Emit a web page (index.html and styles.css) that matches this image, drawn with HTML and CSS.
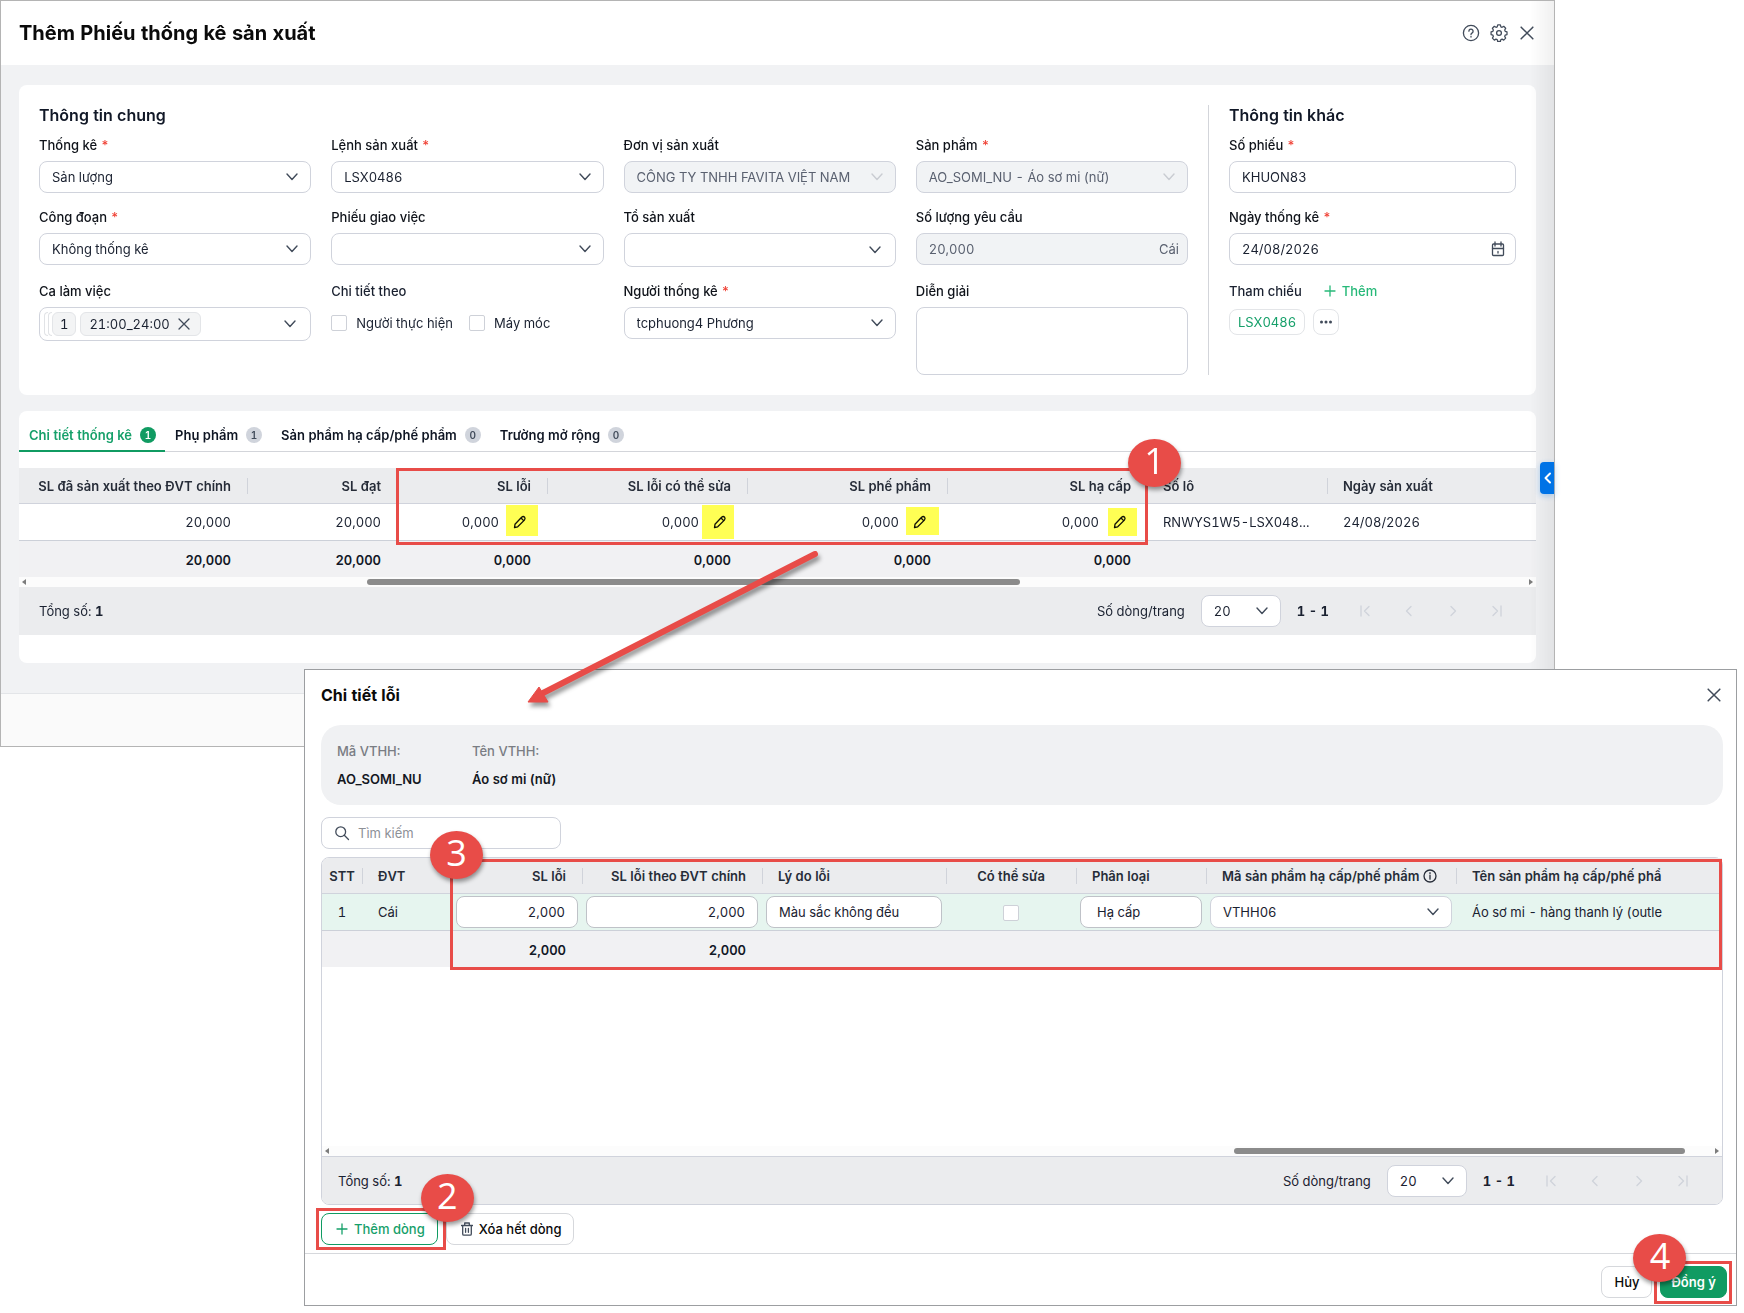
FILE: index.html
```html
<!DOCTYPE html>
<html lang="vi">
<head>
<meta charset="utf-8">
<meta name="viewport" content="width=device-width, initial-scale=1">
<title>Thêm Phiếu thống kê sản xuất</title>
<link rel="stylesheet" href="styles.css">
</head>
<body>
<svg class="sprite" aria-hidden="true">
  <symbol id="i-close" viewBox="0 0 12 12"><path d="M1 1l10 10M11 1L1 11"/></symbol>
  <symbol id="i-plus" viewBox="0 0 12 12"><path d="M6 1v10M1 6h10"/></symbol>
  <symbol id="i-pencil" viewBox="0 0 14 14"><path d="M1.500 12.500l.5-3.200 6.600-7.100q1.700-1.300 3 0q1 1.300-.2 2.900l-6.700 6.700zM8 3l2.300 2.300"/></symbol>
  <symbol id="i-left" viewBox="0 0 12 12"><path d="M8 1.500L3.500 6 8 10.500"/></symbol>
  <symbol id="i-right" viewBox="0 0 12 12"><path d="M4 1.500L8.500 6 4 10.500"/></symbol>
  <symbol id="i-first" viewBox="0 0 12 12"><path d="M2 1v10M10 1.500L5.500 6l4.500 4.500"/></symbol>
  <symbol id="i-last" viewBox="0 0 12 12"><path d="M10 1v10M2 1.500L6.500 6 2 10.500"/></symbol>
</svg>

<main class="window">
  <header class="window-head">
    <h1>Thêm Phiếu thống kê sản xuất</h1>
    <div class="head-actions">
      <button class="icon-btn" type="button" aria-label="Trợ giúp">
        <svg width="18" height="18" viewBox="0 0 18 18" class="ico"><circle cx="9" cy="9" r="7.600"/><path d="M6.900 7.200a2.100 2.100 0 1 1 3.300 1.700c-.8.5-1.200.9-1.200 1.700"/><path d="M9 12.400v.6"/></svg>
      </button>
      <button class="icon-btn" type="button" aria-label="Thiết lập">
        <svg width="18" height="18" viewBox="0 0 18 18" class="ico"><circle cx="9" cy="9" r="2.400"/><path d="M7.600 1.400h2.800l.5 1.900 1.300.5 1.700-1 2 2-1 1.700.5 1.300 1.900.5v2.800l-1.900.5-.5 1.300 1 1.700-2 2-1.700-1-1.300.5-.5 1.900H7.600l-.5-1.900-1.300-.5-1.700 1-2-2 1-1.700-.5-1.300-1.900-.5V8.300l1.900-.5.5-1.300-1-1.700 2-2 1.700 1 1.300-.5z" transform="translate(.4 -.5) scale(.96 1)"/></svg>
      </button>
      <button class="icon-btn" type="button" aria-label="Đóng"><svg width="14" height="14" class="ico"><use href="#i-close"/></svg></button>
    </div>
  </header>

  <div class="window-body">
    <section class="card form-card">
      <div class="form-main">
        <h2>Thông tin chung</h2>
        <div class="form-grid">
          <div class="field">
            <label for="thongke">Thống kê <span class="req">*</span></label>
            <select id="thongke" class="control"><option>Sản lượng</option></select>
          </div>
          <div class="field">
            <label for="lenh">Lệnh sản xuất <span class="req">*</span></label>
            <select id="lenh" class="control"><option>LSX0486</option></select>
          </div>
          <div class="field">
            <label for="donvi">Đơn vị sản xuất</label>
            <select id="donvi" class="control" disabled><option>CÔNG TY TNHH FAVITA VIỆT NAM</option></select>
          </div>
          <div class="field">
            <label for="sanpham">Sản phẩm <span class="req">*</span></label>
            <select id="sanpham" class="control" disabled><option>AO_SOMI_NU - Áo sơ mi (nữ)</option></select>
          </div>
          <div class="field">
            <label for="congdoan">Công đoạn <span class="req">*</span></label>
            <select id="congdoan" class="control"><option>Không thống kê</option></select>
          </div>
          <div class="field">
            <label for="phieugv">Phiếu giao việc</label>
            <select id="phieugv" class="control"><option></option></select>
          </div>
          <div class="field">
            <label for="tosx">Tổ sản xuất</label>
            <select id="tosx" class="control tall"><option></option></select>
          </div>
          <div class="field">
            <label for="slyc">Số lượng yêu cầu</label>
            <div class="control group disabled"><input id="slyc" type="text" value="20,000" disabled><span>Cái</span></div>
          </div>
          <div class="field">
            <span class="label" id="ca-label">Ca làm việc</span>
            <div class="control tall tags" role="group" aria-labelledby="ca-label">
              <span class="stack"><i></i><i></i><span class="tag">1</span></span>
              <span class="tag wide">21:00_24:00 <button class="tag-x" type="button" aria-label="Bỏ chọn"><svg width="12" height="12" class="ico"><use href="#i-close"/></svg></button></span>
            </div>
          </div>
          <div class="field">
            <span class="label plain">Chi tiết theo</span>
            <div class="checks">
              <label><input type="checkbox" class="check">Người thực hiện</label>
              <label><input type="checkbox" class="check">Máy móc</label>
            </div>
          </div>
          <div class="field">
            <label for="nguoitk">Người thống kê <span class="req">*</span></label>
            <select id="nguoitk" class="control"><option>tcphuong4 Phương</option></select>
          </div>
          <div class="field">
            <label for="diengiai">Diễn giải</label>
            <textarea id="diengiai" class="control area"></textarea>
          </div>
        </div>
      </div>
      <div class="form-side">
        <h2>Thông tin khác</h2>
        <div class="side-fields">
          <div class="field">
            <label for="sophieu">Số phiếu <span class="req">*</span></label>
            <input id="sophieu" class="control" type="text" value="KHUON83">
          </div>
          <div class="field">
            <label for="ngaytk">Ngày thống kê <span class="req">*</span></label>
            <div class="control group date"><input id="ngaytk" type="text" value="24/08/2026">
              <svg width="14" height="16" viewBox="0 0 14 16" class="ico cal"><rect x="1.500" y="3" width="11" height="11.500" rx="1"/><path d="M1.500 7.500h11M4 1v4M10 1v4M7 10.500v1.500"/></svg>
            </div>
          </div>
          <div class="field refs">
            <div class="ref-head"><span class="label plain">Tham chiếu</span>
              <button class="add-link" type="button"><svg width="12" height="12" class="ico"><use href="#i-plus"/></svg>Thêm</button></div>
            <div class="chips"><a class="chip" href="#lsx0486">LSX0486</a>
              <button class="chip more" type="button" aria-label="Xem thêm"><svg width="12" height="4" viewBox="0 0 12 4"><circle cx="1.500" cy="2" r="1.500"/><circle cx="6" cy="2" r="1.500"/><circle cx="10.500" cy="2" r="1.500"/></svg></button></div>
          </div>
        </div>
      </div>
    </section>

    <section class="card list-card">
      <nav class="tabs">
        <button class="tab active" type="button">Chi tiết thống kê<span class="count">1</span></button>
        <button class="tab" type="button">Phụ phẩm<span class="count">1</span></button>
        <button class="tab" type="button">Sản phẩm hạ cấp/phế phẩm<span class="count">0</span></button>
        <button class="tab" type="button">Trường mở rộng<span class="count">0</span></button>
      </nav>
      <div class="table-wrap">
        <table class="grid">
          <colgroup><col class="w228"><col class="w150"><col class="w150"><col class="w200"><col class="w200"><col class="w200"><col class="w180"><col></colgroup>
          <thead><tr><th class="num">SL đã sản xuất theo ĐVT chính</th><th class="num">SL đạt</th><th class="num">SL lỗi</th><th class="num">SL lỗi có thể sửa</th><th class="num">SL phế phẩm</th><th class="num">SL hạ cấp</th><th>Số lô</th><th>Ngày sản xuất</th></tr></thead>
          <tbody><tr>
            <td class="num">20,000</td><td class="num">20,000</td>
            <td><div class="edit">0,000<button type="button" class="pen" aria-label="Sửa SL lỗi"><svg width="14" height="14" class="ico"><use href="#i-pencil"/></svg></button></div><span class="hl hl-a"></span></td>
            <td><div class="edit">0,000<button type="button" class="pen" aria-label="Sửa SL lỗi có thể sửa"><svg width="14" height="14" class="ico"><use href="#i-pencil"/></svg></button></div><span class="hl hl-b"></span></td>
            <td><div class="edit">0,000<button type="button" class="pen" aria-label="Sửa SL phế phẩm"><svg width="14" height="14" class="ico"><use href="#i-pencil"/></svg></button></div><span class="hl hl-c"></span></td>
            <td><div class="edit">0,000<button type="button" class="pen" aria-label="Sửa SL hạ cấp"><svg width="14" height="14" class="ico"><use href="#i-pencil"/></svg></button></div><span class="hl hl-d"></span></td>
            <td>RNWYS1W5-LSX048...</td><td>24/08/2026</td>
          </tr></tbody>
          <tfoot><tr><td class="num">20,000</td><td class="num">20,000</td><td class="num">0,000</td><td class="num">0,000</td><td class="num">0,000</td><td class="num">0,000</td><td></td><td></td></tr></tfoot>
        </table>
        <div class="frame frame-1"><span class="step">1</span></div>
      </div>
      <div class="scroll scroll-a"><i class="arr-l"></i><i class="thumb"></i><i class="arr-r"></i></div>
      <div class="pager">
        <span>Tổng số: <b>1</b></span>
        <div class="pager-right">
          <label for="size-a">Số dòng/trang</label>
          <select id="size-a" class="control size"><option>20</option></select>
          <b class="range">1 - 1</b>
          <div class="pages">
            <button type="button" disabled aria-label="Trang đầu"><svg width="12" height="12" class="ico"><use href="#i-first"/></svg></button>
            <button type="button" disabled aria-label="Trang trước"><svg width="12" height="12" class="ico"><use href="#i-left"/></svg></button>
            <button type="button" disabled aria-label="Trang sau"><svg width="12" height="12" class="ico"><use href="#i-right"/></svg></button>
            <button type="button" disabled aria-label="Trang cuối"><svg width="12" height="12" class="ico"><use href="#i-last"/></svg></button>
          </div>
        </div>
      </div>
    </section>
  </div>
  <div class="window-foot"></div>
  <div class="edge"></div>
  <button class="drawer" type="button" aria-label="Mở rộng"><svg width="12" height="12" class="ico"><use href="#i-left"/></svg></button>
</main>

<section class="dialog" role="dialog" aria-labelledby="dlg-title">
  <header class="dialog-head">
    <h2 id="dlg-title">Chi tiết lỗi</h2>
    <button class="icon-btn" type="button" aria-label="Đóng"><svg width="14" height="14" class="ico"><use href="#i-close"/></svg></button>
  </header>
  <div class="dialog-body">
    <dl class="info">
      <div><dt>Mã VTHH:</dt><dd>AO_SOMI_NU</dd></div>
      <div><dt>Tên VTHH:</dt><dd>Áo sơ mi (nữ)</dd></div>
    </dl>
    <div class="control group search">
      <svg width="16" height="16" viewBox="0 0 16 16" class="ico"><circle cx="6.700" cy="6.700" r="4.900"/><path d="M10.300 10.300l4.200 4.200"/></svg>
      <input type="search" placeholder="Tìm kiếm" aria-label="Tìm kiếm">
    </div>
    <div class="panel">
      <div class="table-wrap blank">
        <table class="grid defects">
          <colgroup><col class="w40"><col class="w90"><col class="w130"><col class="w180"><col class="w184"><col class="w130"><col class="w130"><col class="w250"><col class="w222"><col></colgroup>
          <thead><tr><th class="mid">STT</th><th>ĐVT</th><th class="num">SL lỗi</th><th class="num">SL lỗi theo ĐVT chính</th><th>Lý do lỗi</th><th class="mid">Có thể sửa</th><th>Phân loại</th>
            <th><div class="with-info">Mã sản phẩm hạ cấp/phế phẩm<svg width="14" height="14" viewBox="0 0 14 14" class="ico"><circle cx="7" cy="7" r="6"/><path d="M7 6.200v4M7 3.700v.8"/></svg></div></th>
            <th>Tên sản phẩm hạ cấp/phế phẩ</th><td></td></tr></thead>
          <tbody><tr>
            <td class="mid">1</td><td>Cái</td>
            <td class="cell"><input class="control num" type="text" value="2,000" aria-label="SL lỗi"></td>
            <td class="cell"><input class="control num" type="text" value="2,000" aria-label="SL lỗi theo ĐVT chính"></td>
            <td class="cell"><input class="control" type="text" value="Màu sắc không đều" aria-label="Lý do lỗi"></td>
            <td class="mid"><input type="checkbox" class="check" aria-label="Có thể sửa"></td>
            <td class="cell"><input class="control kind" type="text" value="Hạ cấp" aria-label="Phân loại"></td>
            <td class="cell"><select class="control light" aria-label="Mã sản phẩm hạ cấp/phế phẩm"><option>VTHH06</option></select></td>
            <td>Áo sơ mi - hàng thanh lý (outle</td><td></td>
          </tr></tbody>
          <tfoot><tr><td></td><td></td><td class="num">2,000</td><td class="num">2,000</td><td></td><td></td><td></td><td></td><td></td><td></td></tr></tfoot>
        </table>
        <div class="frame frame-3"><span class="step">3</span></div>
      </div>
      <div class="scroll scroll-b"><i class="arr-l"></i><i class="thumb"></i><i class="arr-r"></i></div>
      <div class="pager">
        <span>Tổng số: <b>1</b></span>
        <div class="pager-right">
          <label for="size-b">Số dòng/trang</label>
          <select id="size-b" class="control size"><option>20</option></select>
          <b class="range">1 - 1</b>
          <div class="pages">
            <button type="button" disabled aria-label="Trang đầu"><svg width="12" height="12" class="ico"><use href="#i-first"/></svg></button>
            <button type="button" disabled aria-label="Trang trước"><svg width="12" height="12" class="ico"><use href="#i-left"/></svg></button>
            <button type="button" disabled aria-label="Trang sau"><svg width="12" height="12" class="ico"><use href="#i-right"/></svg></button>
            <button type="button" disabled aria-label="Trang cuối"><svg width="12" height="12" class="ico"><use href="#i-last"/></svg></button>
          </div>
        </div>
      </div>
    </div>
    <div class="row-actions">
      <div class="anchor"><button class="btn outline" type="button"><svg width="12" height="12" class="ico"><use href="#i-plus"/></svg>Thêm dòng</button><div class="frame frame-2"><span class="step">2</span></div></div>
      <button class="btn clear" type="button"><svg width="12" height="14" viewBox="0 0 12 14" class="ico"><path d="M.5 3.500h11M3.700 3.500V1h4.600v2.500M1.700 3.500v8.500q0 1.200 1.200 1.200h6.200q1.200 0 1.200-1.200V3.500M4.600 6.300v4M7.400 6.300v4"/></svg>Xóa hết dòng</button>
    </div>
  </div>
  <footer class="dialog-foot">
    <button class="btn" type="button">Hủy</button>
    <div class="anchor"><button class="btn primary" type="button">Đồng ý</button><div class="frame frame-4"><span class="step">4</span></div></div>
  </footer>
  <svg class="arrow" width="310" height="170" viewBox="0 0 310 170" aria-hidden="true"><path d="M296 14L24 153" stroke="#e84c48" stroke-width="6" stroke-linecap="round"/><path d="M9 162L20 147L29 162Z" fill="#e84c48" stroke="#e84c48" stroke-width="1"/></svg>
</section>
</body>
</html>
```
FILE: styles.css
```css
* { box-sizing: border-box; }

body {
  margin: 0;
  background: #fff;
  color: #1a2130;
  font: 13px/20px Inter, "Liberation Sans", sans-serif;
  font-variant-numeric: tabular-nums;
}

h1, h2, dl, dd { margin: 0; }
button, input, select, textarea { font: inherit; font-variant-numeric: inherit; color: inherit; margin: 0; }
button { background: none; border: 0; padding: 0; }

.sprite { position: absolute; width: 0; height: 0; }
.ico { fill: none; stroke: currentColor; stroke-width: 1.3; stroke-linecap: round; stroke-linejoin: round; flex: none; display: block; }

/* Main window */
.window { position: relative; margin-right: 189px; border: 1px solid #b4b4b4; background: #f1f2f4; }
.window-head { display: flex; justify-content: space-between; align-items: center; height: 64px; padding: 0 17px 0 18px; background: #fff; }
.window-head h1 { font-size: 20px; font-weight: 700; line-height: 28px; color: #0a0a0a; }
.head-actions { display: flex; gap: 8px; }
.icon-btn { width: 20px; height: 20px; display: flex; align-items: center; justify-content: center; color: #414b5a; }
.window-body { padding: 20px 18px 30px; display: flex; flex-direction: column; gap: 16px; }
.window-foot { height: 53px; border-top: 1px solid #e3e5e8; background: #fafafa; }
.edge { position: absolute; top: 0; bottom: 0; right: 0; width: 24px; background: linear-gradient(to right, rgba(0,0,0,0), rgba(0,0,0,.06)); pointer-events: none; }
.drawer { position: absolute; right: 0; top: 461px; width: 14px; height: 32px; padding-left: 2px; border-radius: 4px 0 0 4px; background: #0073e6; color: #fff; display: flex; align-items: center; justify-content: center; box-shadow: 0 2px 6px rgba(0,115,230,.3); }
.drawer .ico { stroke-width: 2; }

.card { background: #fff; border-radius: 8px; }
.card h2 { font-size: 16px; font-weight: 600; line-height: 20px; color: #111827; }

/* Form */
.form-card { display: flex; padding: 20px; }
.form-main { flex: 1; padding-right: 20px; border-right: 1px solid #d3d5da; }
.form-side { width: 307px; padding-left: 20px; }
.form-grid { display: grid; grid-template-columns: repeat(4, minmax(0, 1fr)); gap: 14px 20px; margin-top: 10px; }
.side-fields { display: grid; gap: 14px; margin-top: 10px; }
.field { display: flex; flex-direction: column; gap: 6px; min-width: 0; }
.field > label, .label { font-weight: 500; line-height: 20px; color: #0f131a; }
.label.plain { color: #1a2130; }
.req { color: #f04438; }

.control { width: 100%; height: 32px; border: 1px solid #d0d3dc; border-radius: 8px; background-color: #fff; padding: 0 12px; outline: 0; line-height: 20px; display: block; }
select.control, .tags { appearance: none; background-image: url("data:image/svg+xml,%3Csvg xmlns='http://www.w3.org/2000/svg' width='12' height='8' fill='none' stroke='%23414b5a' stroke-width='1.4' stroke-linecap='round' stroke-linejoin='round'%3E%3Cpath d='M1 1l5 5.500 5-5.500'/%3E%3C/svg%3E"); background-repeat: no-repeat; background-position: right 12px center; }
.control:disabled, .control.disabled { background-color: #f1f3f5; color: #5a6170; opacity: 1; }
select.control:disabled { background-image: url("data:image/svg+xml,%3Csvg xmlns='http://www.w3.org/2000/svg' width='12' height='8' fill='none' stroke='%23c9ccd2' stroke-width='1.4' stroke-linecap='round' stroke-linejoin='round'%3E%3Cpath d='M1 1l5 5.500 5-5.500'/%3E%3C/svg%3E"); }
.control.tall { height: 34px; background-position: right 14px center; }
.control.area { height: 68px; resize: none; }
.control.group { display: flex; align-items: center; gap: 8px; }
.group input { flex: 1; min-width: 0; border: 0; outline: 0; background: none; padding: 0; }
.group.disabled { padding-right: 8px; }
.group.date { padding-right: 10px; }
.group .cal { color: #414b5a; }
.control.tags { display: flex; align-items: center; gap: 4px; padding: 0 4px; }
.stack { display: flex; }
.stack i { width: 4px; height: 24px; border: 1px solid #e1e3e6; border-right: 0; border-radius: 6px 0 0 6px; background: #fff; }
.tag { display: flex; align-items: center; gap: 8px; height: 24px; padding: 0 7px; border: 1px solid #e3e5e8; border-radius: 6px; background: #f3f4f5; }
.tag.wide { padding: 0 8px; }
.tag-x { width: 14px; color: #414b5a; }
.checks { display: flex; gap: 16px; height: 32px; align-items: center; }
.checks label { display: flex; align-items: center; gap: 9px; }
.check { appearance: none; width: 16px; height: 16px; border: 1px solid #ced1d8; border-radius: 2px; background: #fff; display: inline-block; vertical-align: middle; }

.refs { margin-top: 2px; gap: 8px; }
.ref-head { display: flex; gap: 22px; }
.add-link { display: flex; align-items: center; gap: 6px; color: #27b979; font-weight: 500; }
.chips { display: flex; gap: 8px; }
.chip { display: flex; align-items: center; justify-content: center; height: 26px; padding: 0 8px; border: 1px solid #e3e5e8; border-radius: 8px; color: #16a06a; text-decoration: none; }
.chip.more { width: 26px; padding: 0; fill: #414b5a; }

/* List */
.list-card { padding-bottom: 28px; }
.tabs { display: flex; height: 41px; border-bottom: 1px solid #d3d5da; }
.tab { display: flex; align-items: center; gap: 8px; padding: 8px 9px 0 10px; height: 41px; border-bottom: 2px solid transparent; font-weight: 600; color: #0f1624; }
.tab.active { color: #16a06a; border-color: #109b62; }
.count { width: 16px; height: 16px; border-radius: 8px; background: #d0d4dc; color: #414b5a; font-size: 10px; line-height: 16px; text-align: center; }
.active .count { background: #109b62; color: #fff; }
.list-card .table-wrap { margin-top: 16px; }

.table-wrap { position: relative; }
.grid { width: 100%; table-layout: fixed; border-collapse: separate; border-spacing: 0; }
.grid th, .grid td { position: relative; padding: 0 16px; text-align: left; white-space: nowrap; }
.grid .num { text-align: right; }
.grid .mid { text-align: center; padding: 0; }
.grid thead th, .grid thead td { height: 36px; background: #ebecee; border-bottom: 1px solid #d0d3dc; font-weight: 600; color: #262c38; }
.grid th + th::before { content: ""; position: absolute; left: 0; top: 10px; width: 1px; height: 16px; background: #d0d3da; }
.grid tbody td { height: 37px; border-bottom: 1px solid #ccd0d8; }
.grid tfoot td { height: 36px; padding-top: 2px; background: #f1f1f3; font-weight: 600; color: #111827; }
.defects tbody td { background: #e6f5ef; }
.grid .cell { padding: 0 4px; }
.w40 { width: 40px; } .w90 { width: 90px; } .w130 { width: 130px; } .w150 { width: 150px; }
.w180 { width: 180px; } .w184 { width: 184px; } .w200 { width: 200px; } .w222 { width: 222px; }
.w228 { width: 228px; } .w250 { width: 250px; }
.cell .control { border-color: #bfc2c8; }
.cell .light { border-color: #d0d3dc; }
.cell .kind { padding: 0 16px; }
.with-info { display: flex; align-items: center; gap: 4px; }
.edit { display: flex; align-items: center; justify-content: flex-end; gap: 10px; }
.pen { width: 22px; height: 24px; display: flex; align-items: center; justify-content: center; color: #111; }

.scroll { position: relative; height: 10px; background: #fcfcfc; display: flex; align-items: center; justify-content: space-between; padding: 0 3px; }
.thumb { position: absolute; top: 2px; height: 6px; border-radius: 3px; background: #8b8b8b; }
.scroll-a .thumb { left: 348px; width: 653px; }
.scroll-b .thumb { right: 37px; width: 451px; }
.arr-l, .arr-r { border: solid transparent; border-width: 3px 0; }
.arr-l { border-right: 4px solid #7c7c7c; }
.arr-r { border-left: 4px solid #7c7c7c; }

.pager { display: flex; justify-content: space-between; align-items: center; height: 48px; padding: 0 27px 0 20px; background: #ebecee; }
.pager b { font-weight: 700; }
.pager-right { display: flex; align-items: center; gap: 16px; }
.control.size { width: 80px; }
.pages { display: flex; gap: 20px; margin-left: 8px; }
.pages button { width: 24px; height: 24px; display: flex; align-items: center; justify-content: center; color: #cfd3da; }

/* Dialog */
.dialog { position: relative; margin: -78px 7px 7px 304px; border: 1px solid #9c9ea1; background: #fff; }
.dialog-head { display: flex; justify-content: space-between; align-items: center; height: 55px; padding: 0 12px 5px 16px; }
.dialog-head h2 { font-size: 16px; font-weight: 700; color: #0a0a0a; }
.dialog-body { display: flex; flex-direction: column; padding: 0 13px 8px 16px; }
.info { display: flex; height: 80px; padding: 16px; border-radius: 20px; background: #f0f1f3; }
.info div { width: 135px; display: grid; gap: 8px; align-content: start; }
.info dt { color: #7a7d83; font-weight: 500; }
.info dd { color: #14181f; font-weight: 600; }
.search { width: 240px; margin: 12px 0 8px; color: #414b5a; }
.search input::placeholder { color: #8d9097; opacity: 1; }
.panel { border: 1px solid #d0d3dc; border-radius: 8px; }
.panel th:first-child { border-top-left-radius: 7px; }
.blank { padding-bottom: 179px; }
.panel .pager { border-top: 1px solid #d0d3dc; border-radius: 0 0 7px 7px; padding: 0 27px 0 16px; }
.row-actions { display: flex; gap: 8px; margin-top: 8px; }
.btn { display: flex; align-items: center; gap: 6px; height: 32px; padding: 0 12px; border: 1px solid #d6d8dc; border-radius: 8px; background: #fff; color: #0a0a0a; font-weight: 500; white-space: nowrap; }
.btn.outline { border-color: #109b62; color: #16a06a; padding-left: 14px; }
.btn.clear { padding-left: 14px; }
.btn.clear .ico { color: #414b5a; }
.btn.primary { background: #109b62; border-color: #109b62; color: #fff; font-weight: 600; padding: 0 10px; }
.dialog-foot { display: flex; justify-content: flex-end; gap: 8px; padding: 12px 9px 7px; border-top: 1px solid #d6d8dc; }

/* Guide marks laid over the interface */
.anchor { position: relative; }
.frame { position: absolute; border: 3px solid #e84c48; pointer-events: none; z-index: 2; }
.frame-1 { left: 377px; top: 0; width: 752px; height: 77px; }
.frame-2 { inset: -5px -8px -5px -5px; }
.frame-3 { left: 128px; right: 0; top: 1px; height: 111px; }
.frame-4 { inset: -5px -5px -6px -6px; }
.step { position: absolute; width: 53px; height: 48px; border-radius: 50%; background: #e84c48; color: #fff; font: 36px/44px "Open Sans", sans-serif; text-align: center; box-shadow: 1px 3px 4px rgba(0,0,0,.4); }
.frame-1 .step { right: -36px; top: -32px; }
.frame-2 .step { right: -31px; top: -37px; }
.frame-3 .step { left: -23px; top: -31px; }
.frame-4 .step { left: -24px; top: -30px; }
.hl { position: absolute; background: #ffff54; mix-blend-mode: multiply; pointer-events: none; }
.hl-a { right: 9px; top: 1px; width: 32px; height: 31px; }
.hl-b { right: 13px; top: 1px; width: 32px; height: 34px; }
.hl-c { right: 8px; top: 3px; width: 33px; height: 28px; }
.hl-d { right: 10px; top: 4px; width: 29px; height: 28px; }
.arrow { position: absolute; left: 214px; top: -130px; fill: none; filter: drop-shadow(2px 4px 2px rgba(0,0,0,.4)); pointer-events: none; z-index: 3; }
```
